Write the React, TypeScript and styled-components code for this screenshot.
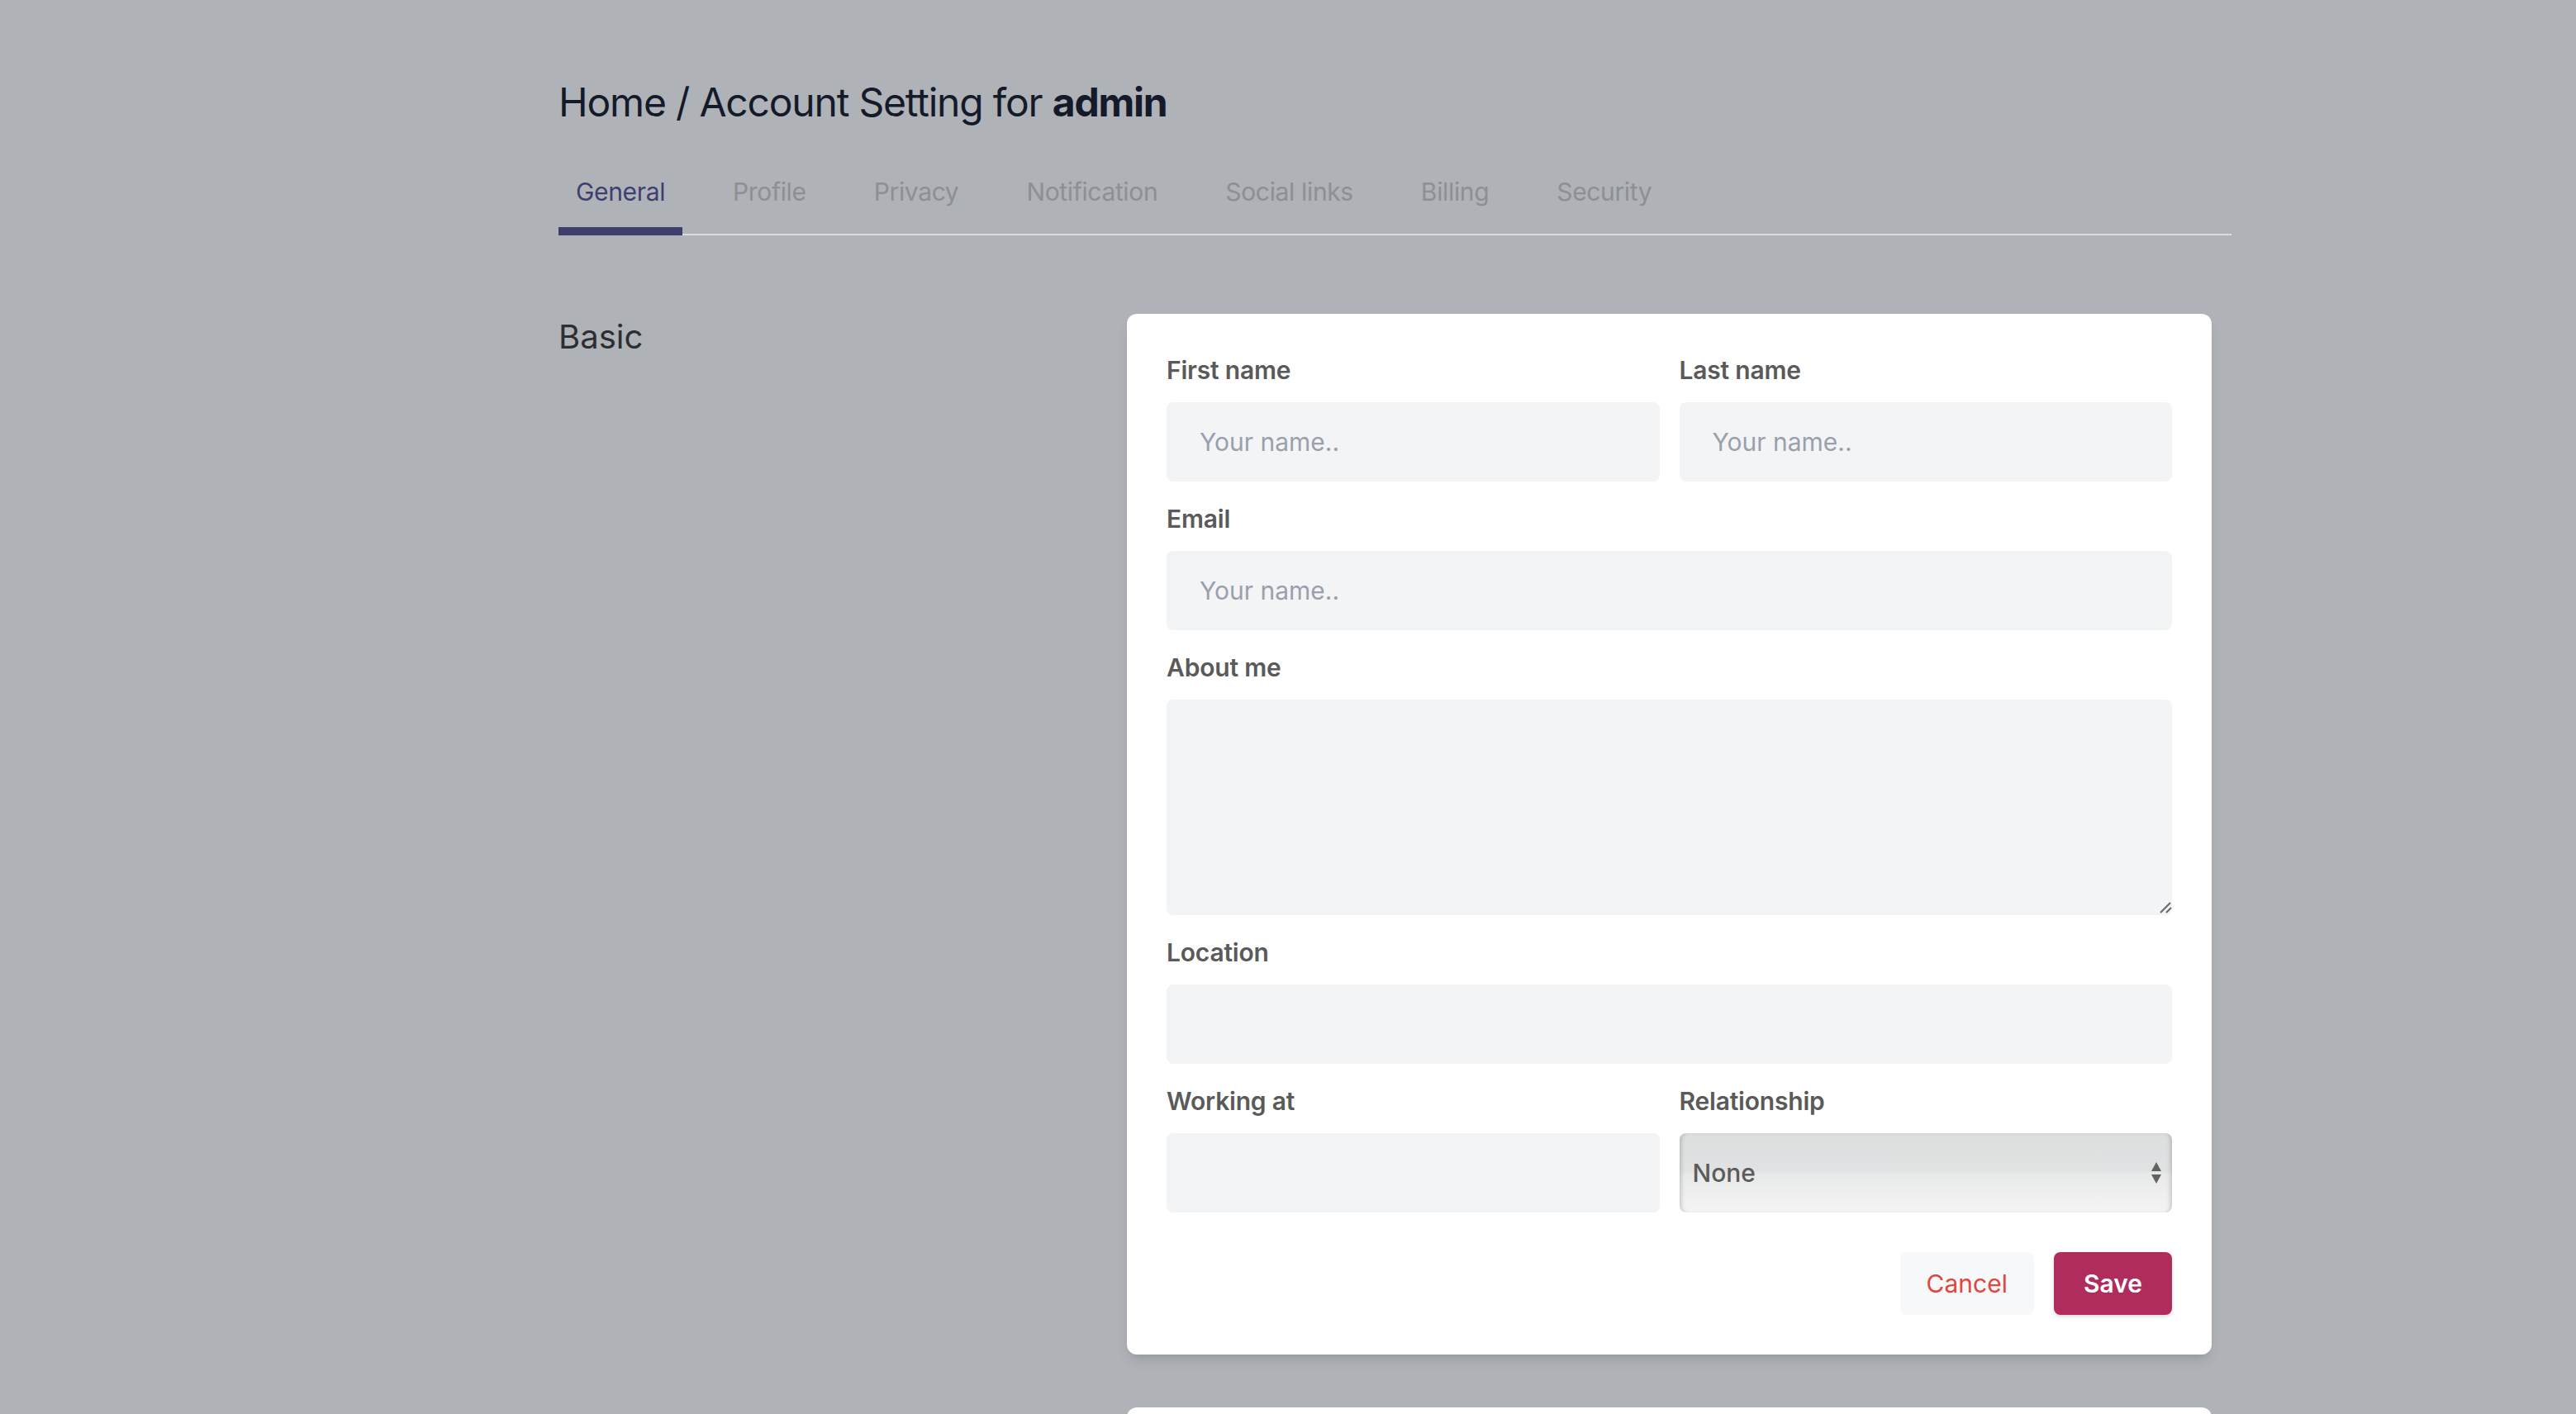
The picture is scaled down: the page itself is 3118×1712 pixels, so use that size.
import React from "react";
import styled, { createGlobalStyle } from "styled-components";

const tabs = ["General", "Profile", "Privacy", "Notification", "Social links", "Billing", "Security"];

export default function App() {
  return (
    <>
      <GlobalStyle />
      <Page>
        {/* header */}
        <Title>
          Home / Account Setting for <strong>admin</strong>
        </Title>

        <TabList>
          {tabs.map((t, i) => (
            <Tab key={t} $active={i === 0}>
              {t}
            </Tab>
          ))}
        </TabList>

        {/* basic section */}
        <Section>
          <SectionTitle>Basic</SectionTitle>
          <Card>
            <Form>
              <Field>
                <Label>First name</Label>
                <Input placeholder="Your name.." />
              </Field>
              <Field>
                <Label>Last name</Label>
                <Input placeholder="Your name.." />
              </Field>
              <Field $wide>
                <Label>Email</Label>
                <Input placeholder="Your name.." />
              </Field>
              <Field $wide>
                <Label>About me</Label>
                <TextAreaWrap>
                  <TextArea />
                  <ResizeHandle width="16" height="16" viewBox="0 0 16 16">
                    <line x1="2" y1="14" x2="14" y2="2" />
                    <line x1="9" y1="14" x2="15" y2="8" />
                  </ResizeHandle>
                </TextAreaWrap>
              </Field>
              <Field $wide>
                <Label>Location</Label>
                <Input />
              </Field>
              <Field>
                <Label>Working at</Label>
                <Input />
              </Field>
              <Field>
                <Label>Relationship</Label>
                <SelectWrap>
                  <Select defaultValue="none">
                    <option value="none">None</option>
                    <option value="single">Single</option>
                    <option value="married">Married</option>
                  </Select>
                  <SelectArrows width="14" height="28" viewBox="0 0 14 28">
                    <polygon points="1,12 7,1 13,12" />
                    <polygon points="1,16 13,16 7,27" />
                  </SelectArrows>
                </SelectWrap>
              </Field>
              <Actions>
                <CancelButton type="button">Cancel</CancelButton>
                <SaveButton type="button">Save</SaveButton>
              </Actions>
            </Form>
          </Card>
        </Section>

        <NextSection>
          <div />
          <Card $tall />
        </NextSection>
      </Page>
    </>
  );
}

const GlobalStyle = createGlobalStyle`
  * {
    box-sizing: border-box;
  }

  body {
    margin: 0;
    background: #afb2b7;
    font-family: Inter, "Noto Sans", sans-serif;
  }
`;

const Page = styled.div`
  width: 2025px;
  margin-left: 676px;
  padding-top: 92px;
`;

const Title = styled.h1`
  margin: 0;
  font-size: 48px;
  line-height: 64px;
  font-weight: 400;
  color: #151a2a;
  letter-spacing: -1.2px;

  strong {
    font-weight: 700;
  }
`;

const TabList = styled.div`
  display: flex;
  gap: 40px;
  margin-top: 56px;
  border-bottom: 2px solid #dcdde0;
`;

const Tab = styled.div<{ $active?: boolean }>`
  padding: 0 21px 23px;
  margin-bottom: -2px;
  font-size: 30px;
  line-height: 40px;
  letter-spacing: -0.35px;
  color: ${(p) => (p.$active ? "#3f3e72" : "#8d8f94")};
  border-bottom: 10px solid ${(p) => (p.$active ? "#3d3e6b" : "transparent")};
  cursor: pointer;
`;

const Section = styled.div`
  display: grid;
  grid-template-columns: 688px 1313px;
  margin-top: 95px;
`;

const NextSection = styled(Section)`
  margin-top: 64px;
`;

const SectionTitle = styled.h2`
  margin: 0;
  font-size: 40px;
  line-height: 56px;
  font-weight: 400;
  color: #2c2e32;
`;

const Card = styled.div<{ $tall?: boolean }>`
  background: #fff;
  border-radius: 12px;
  padding: 48px;
  min-height: ${(p) => (p.$tall ? "600px" : "auto")};
  box-shadow: 0 10px 15px -3px rgba(0, 0, 0, 0.1), 0 4px 6px -4px rgba(0, 0, 0, 0.1);
`;

const Form = styled.form`
  display: grid;
  grid-template-columns: 1fr 1fr;
  column-gap: 24px;
  row-gap: 25px;
`;

const Field = styled.div<{ $wide?: boolean }>`
  display: flex;
  flex-direction: column;
  grid-column: ${(p) => (p.$wide ? "span 2" : "auto")};
`;

const Label = styled.label`
  font-size: 30px;
  line-height: 40px;
  font-weight: 600;
  letter-spacing: -0.2px;
  color: #5a5a5a;
  margin-bottom: 19px;
`;

const Input = styled.input`
  height: 96px;
  padding: 0 40px;
  border: none;
  border-radius: 8px;
  background: #f3f4f6;
  font-family: inherit;
  font-size: 30px;
  color: #333;
  outline: none;

  &::placeholder {
    color: #9aa0ab;
  }
`;

const TextAreaWrap = styled.div`
  position: relative;
`;

const TextArea = styled.textarea`
  display: block;
  width: 100%;
  height: 261px;
  padding: 24px 40px;
  border: none;
  border-radius: 8px;
  background: #f3f4f6;
  font-family: inherit;
  font-size: 30px;
  resize: none;
  outline: none;
`;

const ResizeHandle = styled.svg`
  position: absolute;
  right: 0;
  bottom: 1px;
  stroke: #6a6a6a;
  stroke-width: 2.2;
  pointer-events: none;
`;

const SelectWrap = styled.div`
  position: relative;
`;

const Select = styled.select`
  width: 100%;
  height: 96px;
  appearance: none;
  border: none;
  border-radius: 8px;
  padding: 0 48px 0 16px;
  font-family: inherit;
  font-size: 30px;
  font-weight: 500;
  color: #5b5b5b;
  outline: none;
  background: linear-gradient(
    to bottom,
    #dcdddd 0%,
    #e1e2e3 48%,
    #e8e9e9 52%,
    #f4f4f5 100%
  );
  box-shadow: inset 5px 0 5px -3px rgba(0, 0, 0, 0.18),
    inset -5px 0 5px -3px rgba(0, 0, 0, 0.18);
`;

const SelectArrows = styled.svg`
  position: absolute;
  right: 12px;
  top: 50%;
  transform: translateY(-50%);
  fill: #626262;
  pointer-events: none;
`;

const Actions = styled.div`
  grid-column: span 2;
  display: flex;
  justify-content: flex-end;
  gap: 24px;
  margin-top: 23px;
`;

const BaseButton = styled.button`
  height: 76px;
  border: none;
  border-radius: 8px;
  font-family: inherit;
  font-size: 30px;
  cursor: pointer;
`;

const CancelButton = styled(BaseButton)`
  padding: 0 32px;
  background: #f7f8fa;
  color: #e1463f;
`;

const SaveButton = styled(BaseButton)`
  padding: 0 36px;
  background: #b02c5c;
  color: #fff;
  font-weight: 600;
  box-shadow: 0 2px 4px rgba(0, 0, 0, 0.15);
`;
